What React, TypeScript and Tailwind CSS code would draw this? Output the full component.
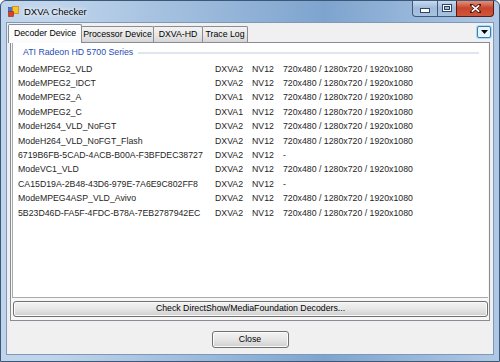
import React from 'react';

const RES = '720x480 / 1280x720 / 1920x1080';

const decoders: [string, string, string, string][] = [
  ['ModeMPEG2_VLD', 'DXVA2', 'NV12', RES],
  ['ModeMPEG2_IDCT', 'DXVA2', 'NV12', RES],
  ['ModeMPEG2_A', 'DXVA1', 'NV12', RES],
  ['ModeMPEG2_C', 'DXVA1', 'NV12', RES],
  ['ModeH264_VLD_NoFGT', 'DXVA2', 'NV12', RES],
  ['ModeH264_VLD_NoFGT_Flash', 'DXVA2', 'NV12', RES],
  ['6719B6FB-5CAD-4ACB-B00A-F3BFDEC38727', 'DXVA2', 'NV12', '-'],
  ['ModeVC1_VLD', 'DXVA2', 'NV12', RES],
  ['CA15D19A-2B48-43D6-979E-7A6E9C802FF8', 'DXVA2', 'NV12', '-'],
  ['ModeMPEG4ASP_VLD_Avivo', 'DXVA2', 'NV12', RES],
  ['5B23D46D-FA5F-4FDC-B78A-7EB2787942EC', 'DXVA2', 'NV12', RES],
];

const tabs = [
  { label: 'Processor Device', w: 'w-[73px]' },
  { label: 'DXVA-HD', w: 'w-[50px]' },
  { label: 'Trace Log', w: 'w-[46px]' },
];

const AppIcon = () => (
  <svg width="11" height="11" viewBox="0 0 11 11">
    <rect x="0.5" y="1.5" width="4" height="4" fill="#3f78d8" stroke="#2a4f9a" strokeWidth="0.6" />
    <rect x="4.5" y="0.5" width="6" height="7" fill="#f6c52c" stroke="#d08a10" strokeWidth="0.8" />
    <rect x="0.5" y="5.5" width="5" height="5" fill="#d9402c" stroke="#9a2414" strokeWidth="0.6" />
  </svg>
);

const btnFace =
  'bg-[#e3e3e3] bg-linear-to-b from-[#f3f3f3] via-[#e6e6e6] via-50% to-[#cfcfcf] border border-[#707070] rounded-[3px] shadow-[inset_0_0_0_1px_#fbfbfb]';

const glassBtn = 'bg-[#a3bedd] bg-linear-to-b from-[#d0e0f0] via-[#9fbadb] via-50% to-[#a8c3e2]';

const App: React.FC = () => {
  return (
    <div className="w-[500px] h-[362px] flex flex-col border border-[#3b5878] rounded-t-[6px] overflow-hidden bg-[#a9c3e1] bg-linear-to-r from-[#c0d5ec] from-10% via-[#7ea4ce] via-65% to-[#b0c8e5] font-['Liberation_Sans',Arial,sans-serif] text-[8.75px] text-[#1e1e1e]">
      {/* title bar */}
      <div className="h-[22px] flex items-start">
        <div className="pl-[7px] pt-[5px]">
          <AppIcon />
        </div>
        <span className="ml-[5px] mt-[4px] text-[9.5px] text-black [text-shadow:0_0_6px_#ffffff,0_0_3px_#ffffff]">
          DXVA Checker
        </span>
        <div className="ml-auto mr-[5px] flex h-[17px] -mt-[1px]">
          <div className={`${glassBtn} w-[26px] h-full flex items-center justify-center rounded-bl-[4px] border border-t-0 border-[#3f5a78]`}>
            <svg width="10" height="5" viewBox="0 0 10 5" className="mt-[4px]">
              <rect x="0.5" y="0.5" width="9" height="4" fill="#ffffff" stroke="#2f4560" />
            </svg>
          </div>
          <div className={`${glassBtn} w-[18px] h-full flex items-center justify-center border-b border-[#3f5a78]`}>
            <svg width="10" height="8" viewBox="0 0 10 8">
              <rect x="0.5" y="0.5" width="9" height="7" fill="#ffffff" stroke="#2f4560" />
              <rect x="2.5" y="2.5" width="5" height="3" fill="#9fb9d8" stroke="#2f4560" />
            </svg>
          </div>
          <div className="w-[38px] h-full flex items-center justify-center rounded-br-[4px] border border-t-0 border-[#5a1c12] bg-[#c8452c] bg-linear-to-b from-[#e49a86] via-[#c8442a] via-50% to-[#d0563a]">
            <svg width="11" height="9" viewBox="0 0 11 9">
              <path d="M1.5 1 L9.5 8 M9.5 1 L1.5 8" stroke="#4a1a12" strokeWidth="3.2" strokeLinecap="square" />
              <path d="M1.8 1.3 L9.2 7.7 M9.2 1.3 L1.8 7.7" stroke="#ffffff" strokeWidth="1.6" />
            </svg>
          </div>
        </div>
      </div>

      {/* client area */}
      <div className="flex-1 mx-[6px] mb-[7px] flex flex-col bg-[#f0f0f0] shadow-[0_0_0_1px_#7f98b5]">
        {/* tab strip */}
        <div className="relative z-10 h-[19px] flex items-end pl-[1px]">
          <div className="w-[74px] h-[19px] -mb-[1px] flex items-center justify-center bg-[#fcfcfc] border border-b-0 border-[#898c95] rounded-t-[2px] text-black">
            Decoder Device
          </div>
          {tabs.map((t) => (
            <div
              key={t.label}
              className={`${t.w} h-[16px] -ml-[1px] flex items-center justify-center border border-b-0 border-[#898c95] rounded-t-[2px] bg-[#e6e6e6] bg-linear-to-b from-[#f3f3f3] via-[#e8e8e8] via-50% to-[#d6d6d6] text-black`}
            >
              {t.label}
            </div>
          ))}
          <div className="ml-auto mr-[2px] mb-[4px] w-[14px] h-[12px] flex items-center justify-center rounded-[2px] border border-[#3c7fb1] bg-[#e6f4fd] shadow-[0_0_0_1px_#a8d8f5]">
            <svg width="7" height="4" viewBox="0 0 7 4">
              <path d="M0 0 H7 L3.5 4 Z" fill="#000000" />
            </svg>
          </div>
        </div>

        {/* tab panel */}
        <div className="h-[279px] mx-[3px] px-[1px] flex flex-col border border-[#898c95] bg-[#f7f7f7]">
          <div className="flex-1 bg-white border-l border-b border-[#a9abb2]">
            <div className="mt-[3px] h-[14px] flex items-center pl-[10px]">
              <span className="text-[#1f4db3]">ATI Radeon HD 5700 Series</span>
              <div className="flex-1 ml-[5px] mr-[9px] h-[2px] bg-[#dde6f1]" />
            </div>
            <div className="mt-[2px] pl-[5px]">
              {decoders.map(([name, api, fmt, res]) => (
                <div key={name} className="h-[14.4px] grid grid-cols-[197px_37px_31px_1fr] items-center whitespace-nowrap">
                  <span>{name}</span>
                  <span>{api}</span>
                  <span>{fmt}</span>
                  <span>{res}</span>
                </div>
              ))}
            </div>
          </div>
          <button className={`${btnFace} mt-[3px] mb-[3px] ml-[1px] h-[16px] text-black`}>
            Check DirectShow/MediaFoundation Decoders...
          </button>
        </div>

        <div className="mt-[10px] flex justify-center">
          <button className={`${btnFace} w-[77px] h-[17px] text-black`}>Close</button>
        </div>
      </div>
    </div>
  );
};

export default App;
